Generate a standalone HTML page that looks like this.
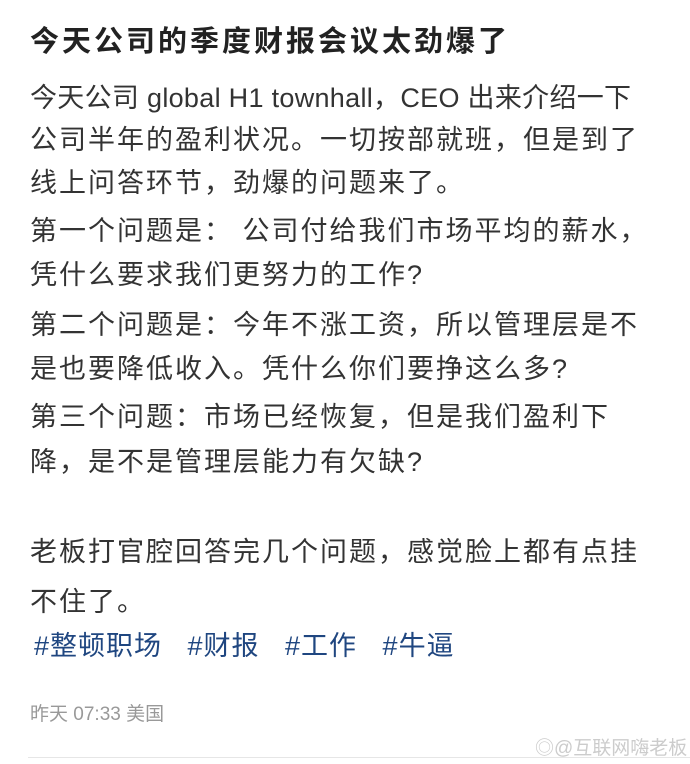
<!DOCTYPE html>
<html><head><meta charset="utf-8"><style>
html,body{margin:0;padding:0;background:#fff;width:690px;height:764px;overflow:hidden;position:relative}
div.l{position:absolute;left:30px;white-space:nowrap;font-family:"Liberation Sans","Noto Sans CJK SC",sans-serif;font-size:27px;letter-spacing:2px;color:#333;line-height:30px}
.t{font-weight:bold;font-size:29px!important;letter-spacing:3px!important;color:#222!important}
.tag{color:#1f4680!important;letter-spacing:1px!important}
.d{font-size:19px!important;color:#999!important;letter-spacing:0!important}
</style></head><body>
<div class="l t" style="top:27px">今天公司的季度财报会议太劲爆了</div>
<div class="l" style="top:83px;letter-spacing:0.3px">今天公司 global H1 townhall，CEO 出来介绍一下</div>
<div class="l" style="top:125px">公司半年的盈利状况。一切按部就班，但是到了</div>
<div class="l" style="top:168px">线上问答环节，劲爆的问题来了。</div>
<div class="l" style="top:216px">第一个问题是： 公司付给我们市场平均的薪水，</div>
<div class="l" style="top:260px">凭什么要求我们更努力的工作?</div>
<div class="l" style="top:310px">第二个问题是：今年不涨工资，所以管理层是不</div>
<div class="l" style="top:354px">是也要降低收入。凭什么你们要挣这么多?</div>
<div class="l" style="top:402px">第三个问题：市场已经恢复，但是我们盈利下</div>
<div class="l" style="top:447px">降，是不是管理层能力有欠缺?</div>
<div class="l" style="top:537px">老板打官腔回答完几个问题，感觉脸上都有点挂</div>
<div class="l" style="top:587px">不住了。</div>
<div class="l tag" style="top:631px;left:34px">#整顿职场&nbsp;&nbsp;&nbsp;#财报&nbsp;&nbsp;&nbsp;#工作&nbsp;&nbsp;&nbsp;#牛逼</div>
<div class="l d" style="top:700px">昨天 07:33 美国</div>
<div class="l" style="top:734px;left:535px;font-size:19px;letter-spacing:0;color:#ccc">◎@互联网嗨老板</div>
<div style="position:absolute;left:28px;right:0;top:757px;height:1px;background:#e6e6e6"></div>
</body></html>
